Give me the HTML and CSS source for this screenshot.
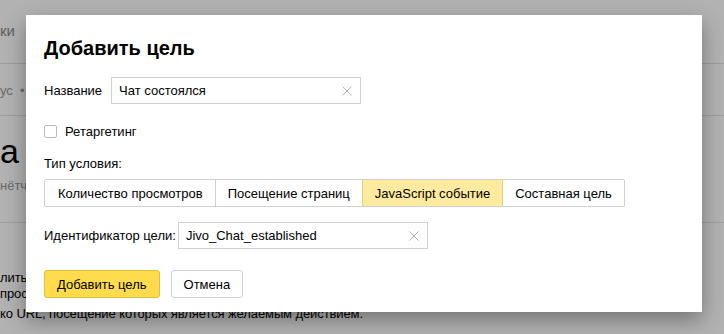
FILE: index.html
```html
<!DOCTYPE html>
<html lang="ru">
<head>
<meta charset="utf-8">
<link rel="stylesheet" href="styles.css">
</head>
<body>
<div class="page">
  <div class="sec sec-top"><span class="nav">ки</span></div>
  <div class="sec sec-crumbs"><span class="crumbs">ус&nbsp;&nbsp;•</span></div>
  <div class="sec sec-head">
    <div class="big">а</div>
    <div class="sub">нётчи</div>
  </div>
  <div class="sec sec-text">
    <p>лить</p>
    <p>прос</p>
    <p class="last">ко URL, посещение которых является желаемым действием.</p>
  </div>
  <div class="overlay"></div>
</div>

<div class="modal">
  <h1 class="title">Добавить цель</h1>
  <div class="row row-name">
    <span class="label">Название</span>
    <div class="input w-name">
      <span class="val">Чат состоялся</span>
      <svg class="clear" viewBox="0 0 10 10" width="10" height="10"><path d="M0.5 0.5L9.5 9.5M9.5 0.5L0.5 9.5" stroke="#b5b5b5" stroke-width="1" fill="none"/></svg>
    </div>
  </div>
  <div class="row row-check">
    <span class="checkbox"></span>
    <span class="label">Ретаргетинг</span>
  </div>
  <div class="row row-type"><span class="label">Тип условия:</span></div>
  <div class="tabs">
    <span class="tab">Количество просмотров</span>
    <span class="tab">Посещение страниц</span>
    <span class="tab active">JavaScript событие</span>
    <span class="tab">Составная цель</span>
  </div>
  <div class="row row-id">
    <span class="label">Идентификатор цели:</span>
    <div class="input w-id">
      <span class="val">Jivo_Chat_established</span>
      <svg class="clear" viewBox="0 0 10 10" width="10" height="10"><path d="M0.5 0.5L9.5 9.5M9.5 0.5L0.5 9.5" stroke="#b5b5b5" stroke-width="1" fill="none"/></svg>
    </div>
  </div>
  <div class="row row-btns">
    <button class="btn btn-primary">Добавить цель</button>
    <button class="btn">Отмена</button>
  </div>
</div>
</body>
</html>
```
FILE: styles.css
```css
* { box-sizing: border-box; }
html, body { margin: 0; padding: 0; }
body {
  width: 724px;
  height: 334px;
  overflow: hidden;
  font-family: "Liberation Sans", Arial, sans-serif;
  font-size: 13px;
  color: #000;
  background: #fff;
  position: relative;
}
.page {
  position: relative;
  height: 334px;
  display: flex;
  flex-direction: column;
}
.sec { border-bottom: 1px solid #e3e3e3; }
.sec-top { height: 64px; padding-top: 22px; }
.nav { font-size: 15px; color: #888; }
.sec-crumbs { height: 52px; padding-top: 19px; }
.crumbs { font-size: 13px; color: #999; }
.sec-head { height: 107px; padding-top: 16px; }
.big { font-size: 34px; line-height: 38px; color: #000; }
.sub { font-size: 13px; color: #999; margin-top: 8px; }
.sec-text { border-bottom: none; padding-top: 47px; }
.sec-text p { margin: 0; font-size: 13px; line-height: 16px; color: #000; letter-spacing: -0.1px; }
.sec-text p.last { margin-top: 4px; }
.overlay {
  position: absolute;
  inset: 0;
  background: rgba(0, 0, 0, 0.3);
}

.modal {
  position: absolute;
  left: 26px;
  top: 15px;
  width: 676px;
  height: 297px;
  background: #fff;
  box-shadow: 0 8px 20px rgba(0, 0, 0, 0.35);
  padding: 21px 18px 0;
  display: flex;
  flex-direction: column;
}
.title {
  margin: 0;
  font-size: 20px;
  line-height: 24px;
  font-weight: bold;
}
.row { display: flex; align-items: center; }
.row-name { margin-top: 17px; gap: 9px; }
.label { white-space: nowrap; }
.input {
  height: 27px;
  border: 1px solid #d0d0d0;
  display: flex;
  align-items: center;
  padding: 0 7px;
  justify-content: space-between;
}
.w-name { width: 250px; }
.w-id { width: 250px; }
.clear { flex: none; margin-right: 1px; }
.row-check { margin-top: 21px; gap: 8px; height: 13px; }
.checkbox {
  width: 13px;
  height: 13px;
  border: 1px solid #bcbcbc;
  border-radius: 2px;
  background: #fff;
}
.row-type { margin-top: 17px; height: 16px; }
.tabs {
  margin-top: 8px;
  display: flex;
  align-self: flex-start;
  height: 28px;
  border: 1px solid #d0d0d0;
  border-radius: 2px;
}
.tab {
  display: flex;
  align-items: center;
  padding: 0 12px;
  border-left: 1px solid #d0d0d0;
}
.tab:first-child { border-left: none; padding-left: 13px; }
.tab.active { background: #ffeba0; border-left-color: #e6cf7b; }
.tab.active + .tab { border-left-color: #e6cf7b; }
.row-id { margin-top: 15px; gap: 2px; }
.row-btns { margin-top: 21px; gap: 11px; }
.btn {
  font: inherit;
  color: #000;
  height: 28px;
  padding: 0 12px;
  background: #fff;
  border: 1px solid #d0d0d0;
  border-radius: 3px;
  cursor: pointer;
}
.btn-primary {
  background: #ffdb4d;
  border-color: #e2bf35;
}
```
